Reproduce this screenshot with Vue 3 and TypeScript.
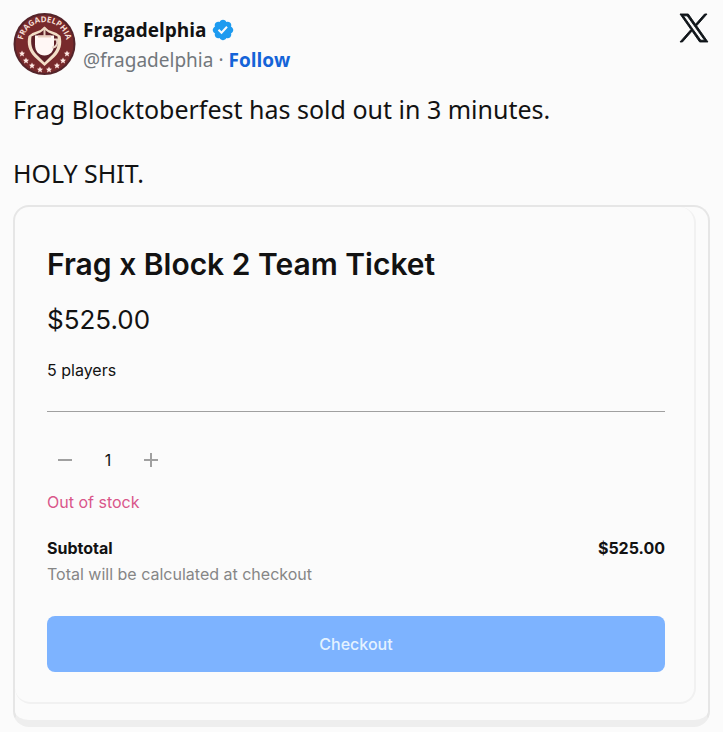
<script setup lang="ts">
import { computed, ref } from 'vue'

const unitPrice = 525
const quantity = ref<number>(1)
const price = `$${unitPrice.toFixed(2)}`
const subtotal = computed<string>(() => `$${(unitPrice * quantity.value).toFixed(2)}`)

const stars = [
  { x: 9, y: 41 },
  { x: 13, y: 48 },
  { x: 19, y: 53 },
  { x: 27, y: 57 },
  { x: 36, y: 57 },
  { x: 44, y: 53 },
  { x: 50, y: 48 },
  { x: 54, y: 41 },
]

function decrease(): void {
  if (quantity.value > 1) quantity.value -= 1
}
function increase(): void {
  quantity.value += 1
}
</script>

<template>
  <article class="post">
    <header class="author">
      <svg class="avatar" viewBox="0 0 63 63" aria-hidden="true">
        <circle cx="31.500" cy="31.500" r="31" fill="#54242a" />
        <circle cx="31.500" cy="31.500" r="29" fill="#782a2c" />
        <defs><path id="seal-arc" d="M9.500 31.500a22 22 0 0 1 44 0" /></defs>
        <text class="seal"><textPath href="#seal-arc" startOffset="50%" text-anchor="middle">FRAGADELPHIA</textPath></text>
        <path d="M31.500 14l4 3.500 8 3 4 3c2 8 0 15-6 21l-10 9-10-9c-6-6-8-13-6-21l4-3 8-3z" fill="#f3dfc8" />
        <path d="M31.500 17l4 3 9 4c1 7 0 13-5 18l-8 8-8-8c-5-5-6-11-5-18l9-4z" fill="#5d2027" />
        <path d="M22 23h19v9c0 7-4 11-9.500 11S22 39 22 32z" fill="#fff7f5" />
        <path d="M31.500 15v8M25 24h13" fill="none" stroke="#e9cfc0" stroke-width="2" />
        <path d="M41 27h3c1 5-1 8-5 8" fill="none" stroke="#ead5c8" stroke-width="2" />
        <path
          v-for="star in stars"
          :key="star.x"
          :transform="`translate(${star.x} ${star.y})`"
          d="M0-3L.9-1l2.100.2L1.400.7l.6 2.300L0 1.800l-2 1.200.6-2.300L-3-.8l2.100-.2z"
          fill="#ffe9e4"
        />
      </svg>
      <div class="identity">
        <div class="name-row">
          <strong class="name">Fragadelphia</strong>
          <svg class="badge" viewBox="0 0 24 24" role="img" aria-label="Verified">
            <path fill="#1d9bf0" d="M22.250 12c0-1.430-.88-2.670-2.190-3.340.46-1.390.2-2.900-.81-3.910s-2.520-1.270-3.910-.81c-.66-1.310-1.910-2.190-3.340-2.190s-2.670.88-3.330 2.190c-1.400-.46-2.910-.2-3.920.81s-1.260 2.520-.8 3.910c-1.310.67-2.200 1.910-2.200 3.340s.89 2.670 2.200 3.340c-.46 1.390-.21 2.900.8 3.910s2.520 1.260 3.910.81c.67 1.310 1.910 2.190 3.340 2.190s2.680-.88 3.340-2.190c1.390.45 2.900.2 3.910-.81s1.270-2.520.81-3.910c1.310-.67 2.190-1.910 2.190-3.340zm-11.710 4.200L6.800 12.460l1.410-1.420 2.260 2.260 4.800-5.230 1.470 1.360-6.200 6.770z" />
          </svg>
        </div>
        <div class="handle-row">
          <span>@fragadelphia</span><span>·</span><a class="follow" href="#">Follow</a>
        </div>
      </div>
      <a class="x-link" href="#" aria-label="View on X">
        <svg class="x-logo" viewBox="0 0 24 24" aria-hidden="true">
          <path d="M14.258 10.152L23.176 0h-2.113l-7.747 8.813L7.133 0H0l9.352 13.328L0 23.973h2.113l8.176-9.309 6.531 9.309h7.133zm-2.895 3.293l-.949-1.328L2.875 1.560h3.246l6.086 8.523.945 1.328 7.910 11.078h-3.246zm0 0" />
        </svg>
      </a>
    </header>

    <p class="message">Frag Blocktoberfest has sold out in 3 minutes.</p>
    <p class="message">HOLY SHIT.</p>

    <section class="card">
      <div class="panel">
        <h1 class="title">Frag x Block 2 Team Ticket</h1>
        <p class="price">{{ price }}</p>
        <p class="detail">5 players</p>
        <hr class="rule" />
        <div class="stepper">
          <button class="step" type="button" aria-label="Decrease quantity" @click="decrease">
            <svg viewBox="0 0 16 16" aria-hidden="true"><path d="M1 8h14" /></svg>
          </button>
          <output class="count">{{ quantity }}</output>
          <button class="step" type="button" aria-label="Increase quantity" @click="increase">
            <svg viewBox="0 0 16 16" aria-hidden="true"><path d="M1 8h14M8 1v14" /></svg>
          </button>
        </div>
        <p class="stock">Out of stock</p>
        <div class="subtotal"><span>Subtotal</span><span>{{ subtotal }}</span></div>
        <p class="note">Total will be calculated at checkout</p>
        <button class="checkout" type="button">Checkout</button>
      </div>
    </section>
  </article>
</template>

<style>
body {
  background: #fbfbfb;
}
</style>

<style scoped>
.post {
  padding: 12px 13px 4px;
  color: #121212;
  font-family: "Noto Sans", "Open Sans", sans-serif;
}
p,
h1 {
  margin: 0;
}
.author {
  display: flex;
  align-items: flex-start;
  gap: 7px;
  margin-bottom: 17px;
}
.avatar {
  width: 63px;
  height: 64px;
}
.seal {
  fill: #f6dfd5;
  font: 700 8px "Open Sans", sans-serif;
}
.identity {
  flex: 1;
  padding-top: 3px;
}
.name-row,
.handle-row {
  display: flex;
  align-items: center;
  height: 30px;
  gap: 4px;
}
.name {
  font-family: "Open Sans", sans-serif;
  font-size: 19px;
  font-weight: 700;
}
.badge {
  width: 24px;
  height: 24px;
}
.handle-row {
  gap: 5px;
  color: #72777c;
  font-size: 19px;
}
.follow {
  color: #1463d8;
  font-family: "Open Sans", sans-serif;
  font-weight: 700;
  text-decoration: none;
}
.x-link {
  padding: 2px 2px 0 0;
}
.x-logo {
  display: block;
  overflow: visible;
  width: 28px;
  height: 28px;
  fill: #0f1419;
  stroke: #0f1419;
  stroke-width: 0.8;
}
.message {
  font-size: 25px;
  line-height: 32px;
}
.message + .message {
  margin-top: 32px;
}
.card {
  margin-top: 16px;
  padding: 0 12px 16px 0;
  border: 2px solid #e6e6e6;
  border-bottom: 7px solid #eeeeee;
  border-radius: 16px;
  font-family: Inter, sans-serif;
}
.panel {
  padding: 37px 29px 30px 32px;
  border-right: 2px solid #f1f1f1;
  border-bottom: 2px solid #f1f1f1;
  border-radius: 16px;
}
.title {
  font-size: 30px;
  font-weight: 600;
  line-height: 40px;
}
.price {
  margin-top: 16px;
  font-size: 26px;
  line-height: 40px;
}
.detail {
  margin-top: 18px;
  font-size: 16px;
  line-height: 24px;
}
.rule {
  margin: 29px 0 32px;
  border: 0;
  border-top: 1px solid #a0a0a0;
}
.stepper {
  display: flex;
  align-items: center;
  gap: 8px;
  height: 32px;
}
.step {
  display: grid;
  place-items: center;
  width: 36px;
  height: 32px;
  padding: 0;
  border: 0;
  background: none;
}
.step svg {
  width: 16px;
  height: 16px;
  fill: none;
  stroke: #a0a0a0;
  stroke-width: 2;
}
.count {
  width: 34px;
  font-size: 16px;
  text-align: center;
}
.stock {
  margin-top: 14px;
  color: #d9568a;
  font-size: 16px;
  line-height: 24px;
}
.subtotal {
  display: flex;
  justify-content: space-between;
  margin-top: 22px;
  font-size: 16px;
  font-weight: 700;
  line-height: 24px;
}
.note {
  margin-top: 2px;
  color: #868686;
  font-size: 16px;
  line-height: 24px;
}
.checkout {
  display: block;
  width: 100%;
  height: 56px;
  margin-top: 30px;
  border: 0;
  border-radius: 8px;
  background: #7db3ff;
  color: #e4f2ff;
  font-family: inherit;
  font-size: 16px;
  font-weight: 500;
}
</style>
